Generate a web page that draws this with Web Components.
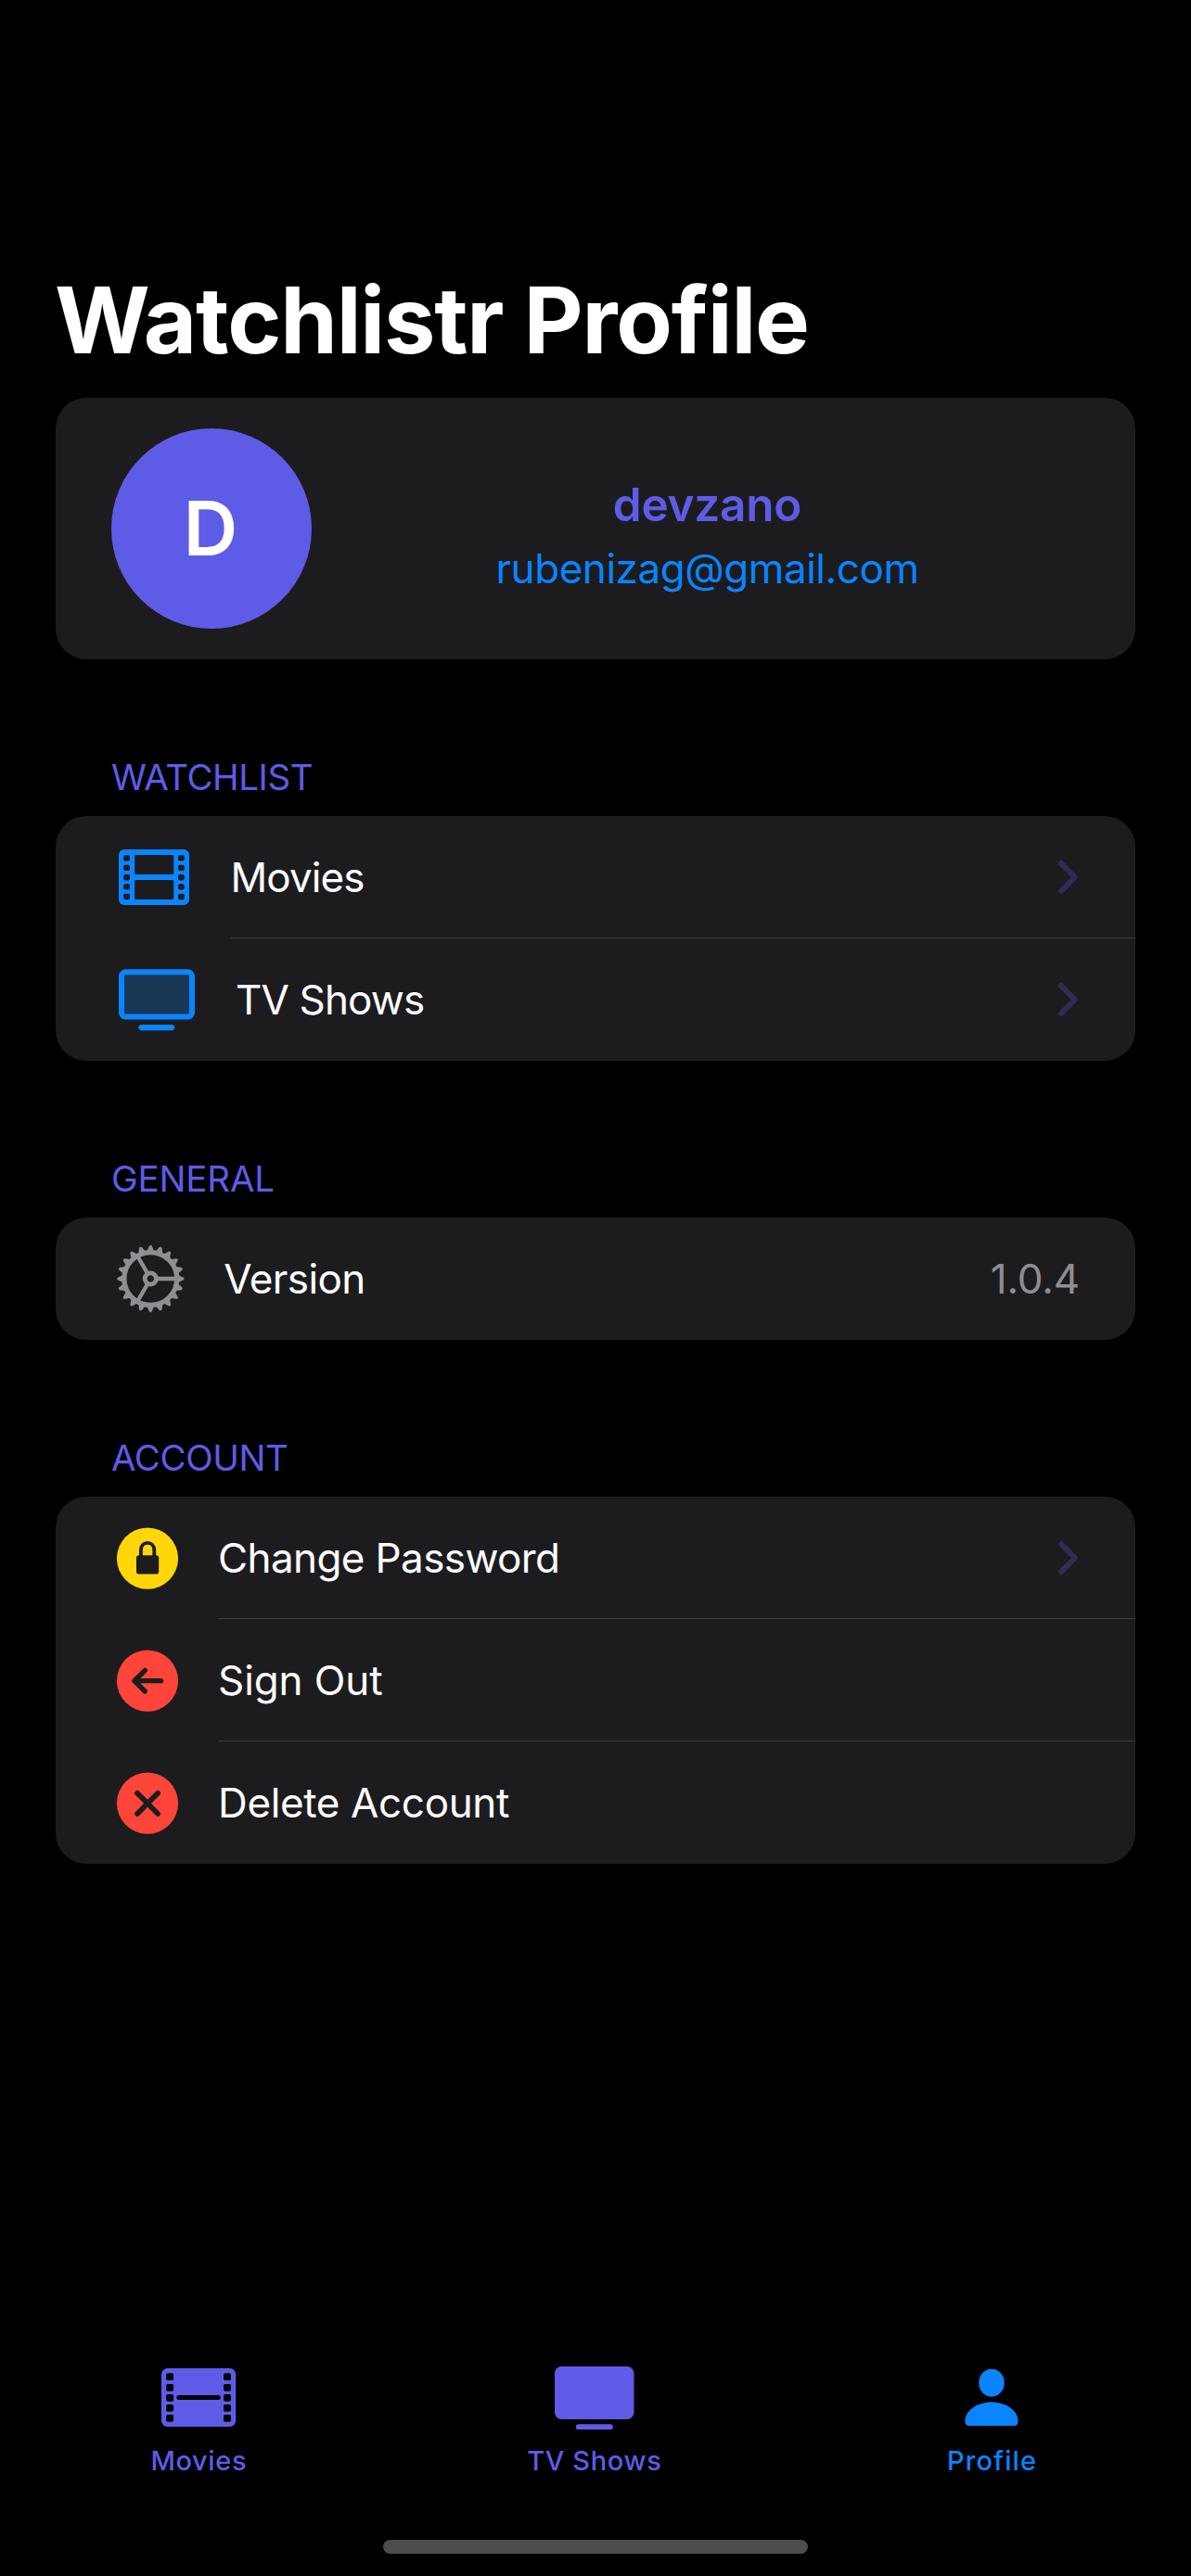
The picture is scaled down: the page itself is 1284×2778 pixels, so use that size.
<!DOCTYPE html>
<html lang="en">
<head>
<meta charset="utf-8">
<title>Watchlistr Profile</title>
<style>
  html, body { margin: 0; background: #000; }
  body { width: 1284px; height: 2778px; overflow: hidden; color: #fff; font-family: Inter, "Liberation Sans", sans-serif; }
</style>
</head>
<body>
<profile-screen>
  <h1 slot="title">Watchlistr Profile</h1>

  <user-card initial="D">
    <span slot="name">devzano</span>
    <span slot="email">rubenizag@gmail.com</span>
  </user-card>

  <list-section style="--head-track:-.45px">
    <span slot="heading">WATCHLIST</span>
    <list-row icon="film" chevron style="--lead:128.5px;--track:-.9px">Movies</list-row>
    <list-row icon="tv" chevron style="--lead:134px;--track:-.854px">TV Shows</list-row>
  </list-section>

  <list-section style="--head-track:-.176px">
    <span slot="heading">GENERAL</span>
    <list-row icon="gear" style="--lead:121.3px;--track:-.6px">Version<span slot="value">1.0.4</span></list-row>
  </list-section>

  <list-section style="--head-track:-.42px">
    <span slot="heading">ACCOUNT</span>
    <list-row icon="lock" chevron style="--lead:115px;--track:-.611px">Change Password</list-row>
    <list-row icon="back" style="--lead:115px;--track:-.1px">Sign Out</list-row>
    <list-row icon="cross" style="--lead:115px;--track:-.37px">Delete Account</list-row>
  </list-section>

  <tab-bar slot="footer">
    <tab-item icon="film-fill" style="--track:.613px">Movies</tab-item>
    <tab-item icon="tv-fill" style="--track:.645px">TV Shows</tab-item>
    <tab-item icon="person" active style="--track:1.086px;--nudge:2px">Profile</tab-item>
  </tab-bar>
</profile-screen>

<script>
const holes = (xs, ys, w, h, fill) => xs.map(x => ys.map(y =>
  `<rect x="${x}" y="${y}" width="${w}" height="${h}" rx="1.8" fill="${fill}"/>`).join('')).join('');

const teeth = () => Array.from({ length: 20 }, (_, i) =>
  `<path d="M-3.9-29.8 L-1.6-35 Q0-37.4 1.6-35 L3.9-29.8Z" transform="rotate(${i * 18 + 90})"/>`).join('');

const spokes = () => [0, 120, 240].map(a =>
  `<path d="M7 0H28" transform="rotate(${a})"/>`).join('');

/* Row icons share a 92x132 canvas whose left edge is the row's content edge. */
const ICONS = {
  'film': [92, 132, `<rect x="8" y="36" width="76" height="60" rx="6" fill="#0a84ff"/>
    <rect x="25.2" y="42" width="42" height="21" rx="1.2" fill="#1c1c1e"/>
    <rect x="25.2" y="69" width="42" height="21" rx="1.2" fill="#1c1c1e"/>
    ${holes([13.2, 72], [42.2, 52.7, 63, 73.2, 83.8], 6.8, 6.4, '#1c1c1e')}`],
  'tv': [92, 132, `<rect x="11" y="36.2" width="76" height="48.2" rx="4.5" fill="#193856" stroke="#0a84ff" stroke-width="6"/>
    <rect x="29.4" y="93" width="38.8" height="6.2" rx="3.1" fill="#0a84ff"/>`],
  'gear': [92, 132, `<g transform="translate(42.3 66)" fill="#8e8e93" stroke="none">${teeth()}
    <g fill="none" stroke="#8e8e93"><circle r="28.4" stroke-width="5.2"/><circle r="6.1" stroke-width="4.8"/>
    <g stroke-width="4.3">${spokes()}</g></g></g>`],
  'lock': [92, 132, `<circle cx="39" cy="66.7" r="33.1" fill="#ffd60a"/>
    <rect x="27" y="63.3" width="24.2" height="20.3" rx="2.8" fill="#1c1c1e"/>
    <path d="M31.9 65V57.7C31.9 47.2 46.3 47.2 46.3 57.7V65" fill="none" stroke="#1c1c1e" stroke-width="3.9"/>`],
  'back': [92, 132, `<circle cx="39" cy="66.7" r="33.1" fill="#ff453a"/>
    <path d="M53.6 66.7H25M36.3 55.4L24.9 66.7L36.3 78" fill="none" stroke="#1c1c1e" stroke-width="5.3" stroke-linecap="round" stroke-linejoin="round"/>`],
  'cross': [92, 132, `<circle cx="39" cy="66.7" r="33.1" fill="#ff453a"/>
    <path d="M28 55.7L50.2 77.9M50.2 55.7L28 77.9" fill="none" stroke="#1c1c1e" stroke-width="5.7" stroke-linecap="round"/>`],
  'chevron': [24, 40, `<path d="M4 5L18.8 20L4 35" fill="none" stroke="#302c56" stroke-width="5.9" stroke-linecap="round" stroke-linejoin="round"/>`],
  'film-fill': [100, 78, `<rect x="10" y="8" width="80.2" height="63" rx="6.5" fill="#5e5ce6"/>
    ${holes([15.1, 77], [13.2, 24.9, 36, 47, 58], 8, 7.8, '#000')}
    <rect x="26.3" y="37" width="47.5" height="5" rx="2.5" fill="#000"/>`],
  'tv-fill': [100, 78, `<rect x="7" y="6" width="85.5" height="57" rx="7.5" fill="#5e5ce6"/>
    <rect x="29.8" y="68.3" width="40" height="5.8" rx="2.9" fill="#5e5ce6"/>`],
  'person': [100, 78, `<ellipse cx="50" cy="23.7" rx="13.7" ry="15" fill="#0a84ff"/>
    <path d="M50 44.5C66 44.5 78.6 54 78.6 65C78.6 68.2 77 70 74 70H26C23 70 21.4 68.2 21.4 65C21.4 54 34 44.5 50 44.5Z" fill="#0a84ff"/>`]
};
const icon = name => {
  const [w, h, body] = ICONS[name];
  return `<svg width="${w}" height="${h}" viewBox="0 0 ${w} ${h}" aria-hidden="true">${body}</svg>`;
};

class Base extends HTMLElement {
  connectedCallback() {
    if (this.shadowRoot) return;
    this.attachShadow({ mode: 'open' }).innerHTML = this.render();
  }
}

customElements.define('profile-screen', class extends Base {
  render() {
    return `<style>
      :host { display: flex; flex-direction: column; width: 1284px; height: 2778px; box-sizing: border-box; padding-top: 285px; background: #000; }
      ::slotted(h1) { margin: 0 59px 24px; font-size: 99px; font-weight: 700; line-height: 120px; letter-spacing: -1.2px; white-space: nowrap; }
      main { flex: 1; padding: 0 60px; }
    </style>
    <slot name="title"></slot><main><slot></slot></main><slot name="footer"></slot>`;
  }
});

customElements.define('user-card', class extends Base {
  render() {
    return `<style>
      :host { display: flex; align-items: center; gap: 25px; height: 282px; box-sizing: border-box; padding: 0 60px; border-radius: 33px; background: #1c1c1e; }
      .avatar { flex: none; box-sizing: border-box; width: 216px; height: 216px; padding-right: 2px; border-radius: 50%; background: #5e5ce6; font-size: 81px; font-weight: 600; line-height: 217px; text-align: center; }
      .who { flex: 1; display: flex; flex-direction: column; align-items: center; gap: 12px; padding-top: 14px; }
      .name { font-size: 49.5px; font-weight: 600; line-height: 60px; letter-spacing: -.27px; color: #5e5ce6; }
      .mail { font-size: 44px; line-height: 54px; letter-spacing: -.45px; color: #0a84ff; }
    </style>
    <div class="avatar">${this.getAttribute('initial')}</div>
    <div class="who"><div class="name"><slot name="name"></slot></div><div class="mail"><slot name="email"></slot></div></div>`;
  }
});

customElements.define('list-section', class extends Base {
  render() {
    return `<style>
      :host { display: block; margin-top: 104px; }
      .head { padding-left: 60px; margin-bottom: 19px; font-size: 38.5px; line-height: 46px; letter-spacing: var(--head-track); color: #5e5ce6; }
      .card { border-radius: 33px; background: #1c1c1e; overflow: hidden; }
      ::slotted(list-row:last-child) { --line: transparent; }
    </style>
    <div class="head"><slot name="heading"></slot></div><div class="card"><slot></slot></div>`;
  }
});

customElements.define('list-row', class extends Base {
  render() {
    return `<style>
      :host { display: flex; height: 132px; padding-left: 60px; font-size: 44px; }
      .lead { flex: none; width: var(--lead); }
      svg { display: block; }
      .body { flex: 1; display: flex; align-items: center; justify-content: space-between; box-sizing: border-box; padding-right: 60px; box-shadow: inset 0 -1px var(--line, #3d3d41); }
      .text { line-height: 132px; letter-spacing: var(--track); white-space: nowrap; }
      .value { letter-spacing: -.19px; color: #8e8e93; line-height: 132px; }
    </style>
    <div class="lead">${icon(this.getAttribute('icon'))}</div>
    <div class="body"><span class="text"><slot></slot></span>
    <span class="value"><slot name="value"></slot></span>${this.hasAttribute('chevron') ? icon('chevron') : ''}</div>`;
  }
});

customElements.define('tab-bar', class extends Base {
  render() {
    return `<style>
      :host { display: block; height: 232px; }
      nav { display: grid; grid-template-columns: 428px 425px 431px; height: 193px; }
      .home { width: 458px; height: 15px; margin: 0 auto; border-radius: 8px; background: #4d4d4d; }
    </style>
    <nav><slot></slot></nav><div class="home"></div>`;
  }
});

customElements.define('tab-item', class extends Base {
  render() {
    return `<style>
      :host { display: flex; flex-direction: column; align-items: center; gap: 12px; color: #5e5ce6; }
      :host([active]) { color: #0a84ff; }
      svg { display: block; }
      span { padding-left: var(--nudge, .6px); font-size: 29px; font-weight: 500; line-height: 35px; letter-spacing: var(--track); white-space: nowrap; }
    </style>
    ${icon(this.getAttribute('icon'))}<span><slot></slot></span>`;
  }
});
</script>
</body>
</html>
